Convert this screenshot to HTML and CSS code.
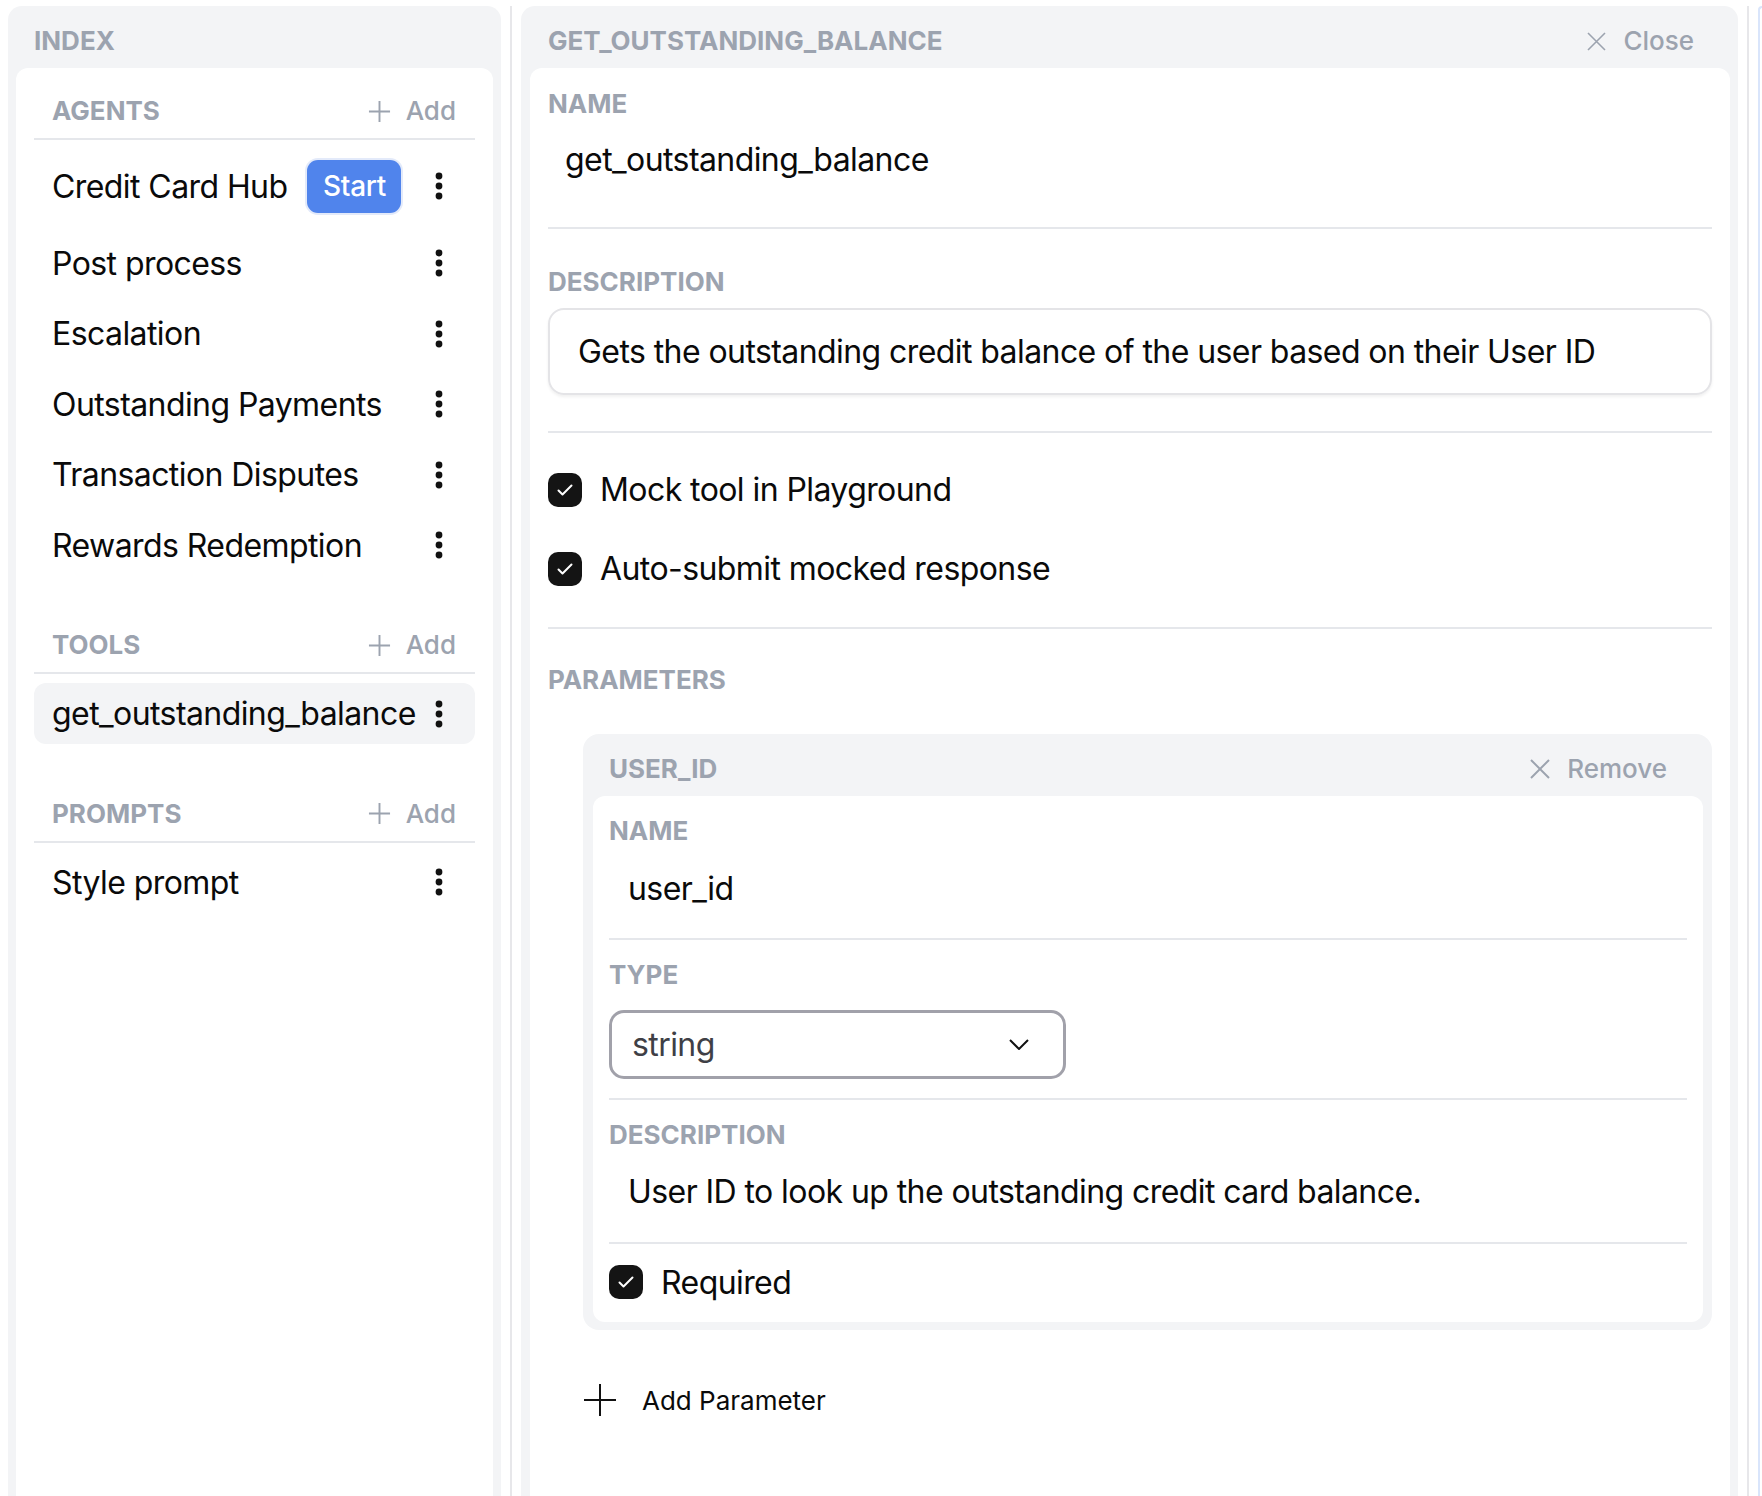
FILE: index.html
```html
<!DOCTYPE html>
<html lang="en">
<head>
<meta charset="utf-8">
<title>Tool editor</title>
<link rel="stylesheet" href="styles.css">
</head>
<body>
<div class="app">
  <aside class="panel panel-left">
    <div class="panel-head">
      <span class="panel-title">INDEX</span>
    </div>
    <div class="card card-left">
      <section class="section">
        <div class="sec-head">
          <span class="sec-title">AGENTS</span>
          <button class="ghost add"><svg class="plus" viewBox="0 0 24 24"><path d="M12 1V23M1 12H23"/></svg>Add</button>
        </div>
        <ul class="list">
          <li class="item tall"><span>Credit Card Hub</span><button class="start">Start</button><span class="kebab"><svg viewBox="0 0 8 28"><circle cx="4" cy="4" r="3.4"/><circle cx="4" cy="14" r="3.4"/><circle cx="4" cy="24" r="3.4"/></svg></span></li>
          <li class="item"><span>Post process</span><span class="kebab"><svg viewBox="0 0 8 28"><circle cx="4" cy="4" r="3.4"/><circle cx="4" cy="14" r="3.4"/><circle cx="4" cy="24" r="3.4"/></svg></span></li>
          <li class="item"><span>Escalation</span><span class="kebab"><svg viewBox="0 0 8 28"><circle cx="4" cy="4" r="3.4"/><circle cx="4" cy="14" r="3.4"/><circle cx="4" cy="24" r="3.4"/></svg></span></li>
          <li class="item"><span>Outstanding Payments</span><span class="kebab"><svg viewBox="0 0 8 28"><circle cx="4" cy="4" r="3.4"/><circle cx="4" cy="14" r="3.4"/><circle cx="4" cy="24" r="3.4"/></svg></span></li>
          <li class="item"><span>Transaction Disputes</span><span class="kebab"><svg viewBox="0 0 8 28"><circle cx="4" cy="4" r="3.4"/><circle cx="4" cy="14" r="3.4"/><circle cx="4" cy="24" r="3.4"/></svg></span></li>
          <li class="item"><span>Rewards Redemption</span><span class="kebab"><svg viewBox="0 0 8 28"><circle cx="4" cy="4" r="3.4"/><circle cx="4" cy="14" r="3.4"/><circle cx="4" cy="24" r="3.4"/></svg></span></li>
        </ul>
      </section>
      <section class="section">
        <div class="sec-head">
          <span class="sec-title">TOOLS</span>
          <button class="ghost add"><svg class="plus" viewBox="0 0 24 24"><path d="M12 1V23M1 12H23"/></svg>Add</button>
        </div>
        <ul class="list">
          <li class="item selected"><span>get_outstanding_balance</span><span class="kebab"><svg viewBox="0 0 8 28"><circle cx="4" cy="4" r="3.4"/><circle cx="4" cy="14" r="3.4"/><circle cx="4" cy="24" r="3.4"/></svg></span></li>
        </ul>
      </section>
      <section class="section">
        <div class="sec-head">
          <span class="sec-title">PROMPTS</span>
          <button class="ghost add"><svg class="plus" viewBox="0 0 24 24"><path d="M12 1V23M1 12H23"/></svg>Add</button>
        </div>
        <ul class="list">
          <li class="item"><span>Style prompt</span><span class="kebab"><svg viewBox="0 0 8 28"><circle cx="4" cy="4" r="3.4"/><circle cx="4" cy="14" r="3.4"/><circle cx="4" cy="24" r="3.4"/></svg></span></li>
        </ul>
      </section>
    </div>
  </aside>

  <div class="divider"></div>

  <main class="panel panel-right">
    <div class="panel-head">
      <span class="panel-title">GET_OUTSTANDING_BALANCE</span>
      <button class="ghost close"><svg class="x" viewBox="0 0 21 21"><path d="M2 2L19 19M19 2L2 19"/></svg>Close</button>
    </div>
    <div class="card card-right">
      <div class="field f-name">
        <div class="label">NAME</div>
        <div class="value">get_outstanding_balance</div>
      </div>
      <div class="field f-desc">
        <div class="label">DESCRIPTION</div>
        <div class="textbox">Gets the outstanding credit balance of the user based on their User ID</div>
      </div>
      <div class="field f-checks">
        <label class="check-row"><svg class="checkbox" viewBox="0 0 34 34"><rect width="34" height="34" rx="10"/><path d="M10.5 17.5L14.5 21.5L23.5 12.5"/></svg>Mock tool in Playground</label>
        <label class="check-row"><svg class="checkbox" viewBox="0 0 34 34"><rect width="34" height="34" rx="10"/><path d="M10.5 17.5L14.5 21.5L23.5 12.5"/></svg>Auto-submit mocked response</label>
      </div>
      <div class="f-params">
        <div class="label">PARAMETERS</div>
        <div class="param">
          <div class="panel-head param-head">
            <span class="panel-title">USER_ID</span>
            <button class="ghost remove"><svg class="x x2" viewBox="0 0 22 22"><path d="M2 2L20 20M20 2L2 20"/></svg>Remove</button>
          </div>
          <div class="param-card">
            <div class="pfield p-name">
              <div class="label">NAME</div>
              <div class="value">user_id</div>
            </div>
            <div class="pfield p-type">
              <div class="label">TYPE</div>
              <div class="select"><span>string</span><svg class="chev" viewBox="0 0 20 11"><path d="M1 1L10 10L19 1"/></svg></div>
            </div>
            <div class="pfield p-desc">
              <div class="label">DESCRIPTION</div>
              <div class="value">User ID to look up the outstanding credit card balance.</div>
            </div>
            <div class="p-req">
              <label class="check-row"><svg class="checkbox" viewBox="0 0 34 34"><rect width="34" height="34" rx="10"/><path d="M10.5 17.5L14.5 21.5L23.5 12.5"/></svg>Required</label>
            </div>
          </div>
        </div>
        <button class="add-param"><svg class="bigplus" viewBox="0 0 32 32"><path d="M16 0V32M0 16H32"/></svg>Add Parameter</button>
      </div>
    </div>
  </main>

  <div class="divider"></div>

  <div class="panel-third"></div>
</div>
</body>
</html>
```
FILE: styles.css
```css
* { box-sizing: border-box; margin: 0; padding: 0; }
html, body { height: 100%; overflow: hidden; background: #ffffff; }
body { font-family: Inter, "Noto Sans", sans-serif; color: #0a0a0a; }
button { font-family: inherit; border: 0; background: none; cursor: pointer; }
ul { list-style: none; }

.app { display: flex; gap: 9px; padding: 6px 0 0 8px; height: 1540px; }

.panel { background: #f3f4f6; border-radius: 14px 14px 0 0; display: flex; flex-direction: column; }
.panel-left { width: 493px; flex: none; padding: 0 8px; }
.panel-right { width: 1217px; flex: none; padding: 0 8px 0 9px; }

.divider { width: 2px; flex: none; background: #e7e7ea; }

.panel-third { flex: 1; border: 2px solid #d9e5fb; border-right: 0; border-bottom: 0; border-radius: 14px 0 0 0; background: #fff; }

.panel-head { height: 62px; padding: 8px 18px 0 18px; display: flex; align-items: center; flex: none; }
.panel-title { font-size: 26px; font-weight: 700; line-height: 36px; color: #9ca3af; }

.ghost { margin-left: auto; display: flex; align-items: center; gap: 16px; color: #9ca3af; font-size: 26px; font-weight: 500; line-height: 36px; padding: 0 18px; }
.x { width: 21px; height: 21px; fill: none; stroke: #9ca3af; stroke-width: 1.6; }
.x2 { width: 22px; height: 22px; stroke-width: 2; }
.plus { width: 23px; height: 23px; fill: none; stroke: #9ca3af; stroke-width: 2; }

.card { background: #fff; border-radius: 12px 12px 0 0; flex: 1; padding: 0 18px; }

/* left index */
.section { padding-top: 16px; }
.sec-head { height: 56px; border-bottom: 2px solid #e5e7eb; display: flex; align-items: center; padding-left: 18px; }
.sec-title { font-size: 26px; font-weight: 700; line-height: 36px; color: #9ca3af; }
.add { padding: 0 19px 0 0; gap: 15px; }
.list { display: flex; flex-direction: column; gap: 9.5px; padding: 9px 0 26.5px; }
.item { height: 61px; display: flex; align-items: center; padding: 0 20px 0 18px; border-radius: 12px; font-size: 32px; line-height: 45px; letter-spacing: -0.018em; }
.item.tall { height: 74px; }
.item.selected { background: #f3f4f6; }
.start { margin-left: 20px; width: 94px; height: 53px; border-radius: 11px; background: #5084ec; color: #fff; font-size: 28px; font-weight: 500; letter-spacing: -0.01em; box-shadow: 0 0 0 2px #e3eafa; }
.kebab { margin-left: auto; width: 32px; display: flex; justify-content: center; }
.kebab svg { width: 8px; height: 28px; fill: #111; }

/* right form */
.label { font-size: 26px; font-weight: 700; line-height: 36px; color: #9ca3af; }
.value { font-size: 32px; line-height: 45px; color: #0a0a0a; letter-spacing: -0.018em; }
.field { border-bottom: 2px solid #e5e7eb; }
.f-name { padding: 17.5px 0 45.5px; }
.f-name .value { margin-top: 15px; padding-left: 17px; }
.f-desc { padding: 35px 0 36px; }
.textbox { margin-top: 8px; border: 2px solid #e4e4e7; border-radius: 16px; padding: 19px 28px; font-size: 32px; line-height: 45px; letter-spacing: -0.018em; box-shadow: 0 2px 3px rgba(0,0,0,0.06); }
.f-checks { padding: 34px 0 36px; display: flex; flex-direction: column; gap: 34px; }
.check-row { display: flex; align-items: center; gap: 18px; font-size: 32px; line-height: 45px; letter-spacing: -0.018em; }
.checkbox { width: 34px; height: 34px; flex: none; }
.checkbox rect { fill: #141414; }
.checkbox path { fill: none; stroke: #fff; stroke-width: 2; stroke-linecap: round; stroke-linejoin: round; }

.f-params { padding-top: 33px; }
.param { margin: 36px 0 0 35px; background: #f3f4f6; border-radius: 16px; padding: 0 9px 8px 10px; }
.param-head { padding-left: 16px; }
.param-card { background: #fff; border-radius: 12px; padding: 0 16px; }
.pfield { border-bottom: 2px solid #e5e7eb; }
.p-name { padding: 17px 0 27.8px; }
.p-name .value { margin-top: 16.5px; padding-left: 19px; }
.p-type { padding: 16.5px 0 19px; }
.select { margin-top: 17.5px; width: 457px; height: 69px; border: 3px solid #a1a1aa; border-radius: 15px; display: flex; align-items: center; padding: 0 34px 0 20px; font-size: 32px; letter-spacing: -0.018em; color: #3f3f46; }
.chev { margin-left: auto; width: 20px; height: 11px; fill: none; stroke: #111; stroke-width: 2; }
.p-desc { padding: 16.7px 0 27.5px; }
.p-desc .value { margin-top: 16.5px; padding-left: 19px; }
.p-req { padding: 16px 0 17.5px; }

.add-param { margin: 47.5px 0 0 36px; display: flex; align-items: center; gap: 26px; font-size: 26px; font-weight: 400; line-height: 45px; color: #0a0a0a; }
.bigplus { width: 32px; height: 32px; fill: none; stroke: #111; stroke-width: 2; }
```
